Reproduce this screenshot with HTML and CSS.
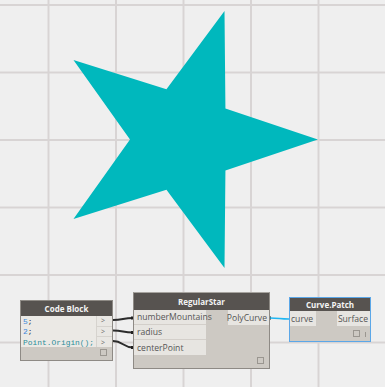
FILE: index.html
```html
<!DOCTYPE html>
<html>
<head>
<meta charset="utf-8">
<link rel="stylesheet" href="styles.css">
</head>
<body>
<div class="canvas">
  <svg class="geometry" width="385" height="387" viewBox="0 0 385 387">
    <polygon class="star" points="317.85,139.5 225.43,108.49 224.5,11 166.45,89.33 73.45,60.09 130,139.5 73.45,218.91 166.45,189.67 224.5,267.99 225.43,170.51"/>
  </svg>

  <svg class="wires" width="385" height="387" viewBox="0 0 385 387">
    <path class="wire" d="M113,320 C123,320 123,318 133,318"/>
    <path class="wire" d="M113,330.5 C123,330.5 123,332.5 133,332.5"/>
    <path class="wire" d="M113,341 C123,341 123,347.5 133,347.5"/>
    <rect class="wire-end" x="131" y="316.5" width="3" height="3"/>
    <rect class="wire-end" x="131" y="331" width="3" height="3"/>
    <rect class="wire-end" x="131" y="346" width="3" height="3"/>
    <rect class="wire-end" x="268" y="316.5" width="3" height="3"/>
    <path class="wire-sel" d="M270,318 C280,318 279,319 289,319"/>
  </svg>

  <div class="node code-block">
    <div class="node-header">Code Block</div>
    <div class="cb-body">
      <div class="code">
        <div class="code-line"><span class="num">5</span>;</div>
        <div class="code-line"><span class="num">2</span>;</div>
        <div class="code-line"><span class="cls">Point</span>.<span class="cls">Origin</span>();</div>
      </div>
      <div class="cb-outs">
        <div class="cb-out">&gt;</div>
        <div class="cb-out">&gt;</div>
        <div class="cb-out">&gt;</div>
      </div>
    </div>
    <div class="node-footer"><span class="preview"></span></div>
  </div>

  <div class="node regular-star">
    <div class="node-header">RegularStar</div>
    <div class="node-body">
      <div class="inputs">
        <div class="port in">numberMountains</div>
        <div class="port in">radius</div>
        <div class="port in">centerPoint</div>
      </div>
      <div class="outputs">
        <div class="port out">PolyCurve</div>
      </div>
    </div>
    <div class="node-footer"><span class="preview"></span></div>
  </div>

  <div class="node curve-patch">
    <div class="node-header">Curve.Patch</div>
    <div class="node-body">
      <div class="inputs">
        <div class="port in">curve</div>
      </div>
      <div class="outputs">
        <div class="port out">Surface</div>
      </div>
    </div>
    <div class="node-footer"><span class="preview"></span><span class="bar"></span></div>
  </div>
</div>
</body>
</html>
```

FILE: styles.css
```css
html, body {
  margin: 0;
  padding: 0;
}

body {
  width: 385px;
  height: 387px;
  overflow: hidden;
  font-family: "Open Sans", "DejaVu Sans", sans-serif;
}

.canvas {
  position: relative;
  width: 385px;
  height: 387px;
  background-color: #efefef;
  background-image:
    linear-gradient(to right, #d8d4d4 0, #d8d4d4 2px, transparent 2px),
    linear-gradient(to bottom, #d8d4d4 0, #d8d4d4 2px, transparent 2px);
  background-size: 67.5px 67.5px;
  background-position: 47.5px 4px;
  overflow: hidden;
}

.geometry, .wires {
  position: absolute;
  left: 0;
  top: 0;
}

.star {
  fill: #00b8bd;
}

.wire {
  fill: none;
  stroke: #2b2b2b;
  stroke-width: 2;
}

.wire-end {
  fill: #1f1f1f;
}

.wire-sel {
  fill: none;
  stroke: #1fb6f2;
  stroke-width: 1.6;
}

.node {
  position: absolute;
  display: flex;
  flex-direction: column;
  box-sizing: border-box;
  background: #cdc9c3;
  border: 1px solid #8e8a85;
}

.node-header {
  background: #575350;
  color: #f4f4f4;
  font-weight: 700;
  font-size: 8px;
  display: flex;
  align-items: center;
  justify-content: center;
  flex: none;
}

.node-footer {
  flex: 1;
  display: flex;
  justify-content: flex-end;
  align-items: flex-end;
  gap: 5px;
  padding: 0 5px 4px 0;
}

.preview {
  width: 5px;
  height: 5px;
  border: 1px solid #9a9690;
}

/* Code block */
.code-block {
  left: 20px;
  top: 300px;
  width: 93px;
  height: 61px;
}

.code-block .node-header {
  height: 15px;
}

.cb-body {
  display: flex;
  height: 31px;
  background: #e9e7e3;
}

.code {
  flex: 1;
  padding: 1px 0 0 2px;
  font-family: "Liberation Mono", "DejaVu Sans Mono", monospace;
  font-size: 7.9px;
  line-height: 10.3px;
  color: #333;
  background-color: #ebe9e5;
  background-image: radial-gradient(#d9d6d1 0.6px, transparent 0.7px);
  background-size: 4px 4px;
}

.num {
  color: #3d87d8;
}

.cls {
  color: #2d8d99;
}

.code-line:last-child {
  color: #2d8d99;
}

.cb-outs {
  width: 15px;
  display: flex;
  flex-direction: column;
  border-left: 1px solid #d6d3ce;
}

.cb-out {
  flex: 1;
  font-size: 7px;
  color: #666;
  display: flex;
  align-items: center;
  padding-left: 4px;
  border-bottom: 1px solid #d6d3ce;
}

.cb-out:last-child {
  border-bottom: none;
}

/* Generic node body */
.node-body {
  display: flex;
  justify-content: space-between;
  flex: none;
}

.inputs, .outputs {
  display: flex;
  flex-direction: column;
}

.port {
  background: #e7e5e1;
  color: #555;
  font-size: 8.6px;
  height: 15px;
  box-sizing: border-box;
  display: flex;
  align-items: center;
}

.port.in {
  padding-left: 3px;
  border-bottom: 1px solid #d3cfca;
}

.port.in:last-child {
  border-bottom: none;
}

.port.out {
  justify-content: flex-end;
  padding-right: 2px;
}

/* RegularStar */
.regular-star {
  left: 133px;
  top: 292px;
  width: 137px;
  height: 77px;
  border-top-color: #a7a49f;
}

.regular-star .node-header {
  height: 17px;
}

.regular-star .inputs {
  width: 72px;
}

.regular-star .outputs .port {
  width: 41px;
}

/* Curve.Patch */
.curve-patch {
  left: 289px;
  top: 297px;
  width: 82px;
  height: 45px;
  border-color: #5ba7e8;
}

.curve-patch .node-header {
  height: 13px;
}

.curve-patch .inputs .port {
  width: 26px;
  padding-left: 1px;
}

.curve-patch .outputs .port {
  width: 33px;
}

.bar {
  width: 1px;
  height: 5px;
  background: #9a9690;
  margin-right: -1px;
}
```
